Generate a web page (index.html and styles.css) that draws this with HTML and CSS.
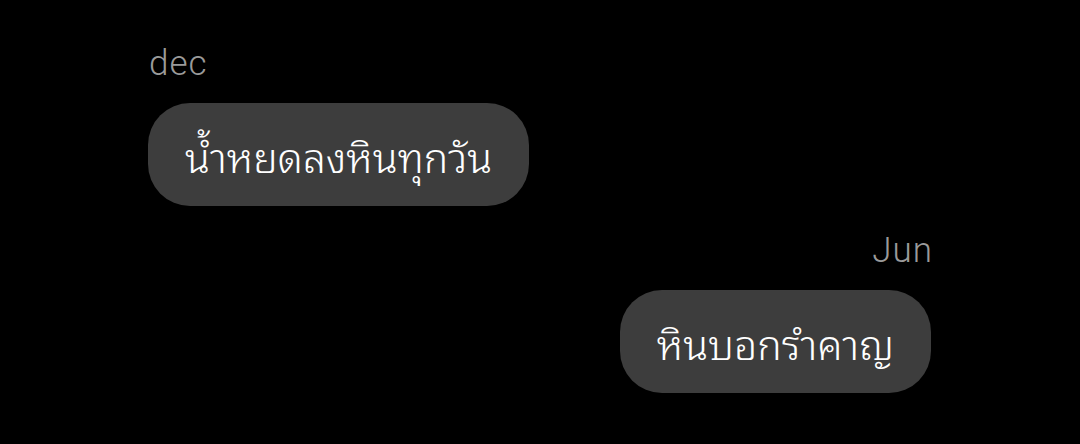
FILE: index.html
```html
<!DOCTYPE html>
<html lang="th">
<head>
<meta charset="utf-8">
<link rel="stylesheet" href="styles.css">
</head>
<body>
<main class="chat">
  <section class="msg msg-left">
    <div class="name">dec</div>
    <div class="bubble">น้ำหยดลงหินทุกวัน</div>
  </section>
  <section class="msg msg-right">
    <div class="name">Jun</div>
    <div class="bubble">หินบอกรำคาญ</div>
  </section>
</main>
</body>
</html>
```
FILE: styles.css
```css
html, body {
  margin: 0;
  padding: 0;
  background: #000;
  height: 100%;
}
.chat {
  width: 783px;
  margin-left: 148px;
  padding-top: 44px;
  display: flex;
  flex-direction: column;
  gap: 25px;
}
.msg {
  display: flex;
  flex-direction: column;
}
.msg-left { align-items: flex-start; }
.msg-right { align-items: flex-end; }
.name {
  font-family: Roboto, "Liberation Sans", sans-serif;
  font-weight: 300;
  font-size: 35px;
  line-height: 40px;
  letter-spacing: 1px;
  color: #9a9a9a;
  padding: 0 0 0 1px;
  margin-bottom: 19px;
}
.msg-right .name {
  margin-right: -2px;
}
.bubble {
  background: #3d3d3d;
  color: #fff;
  font-family: "Noto Sans Thai Looped", "Noto Sans Thai", "Noto Sans", sans-serif;
  font-weight: 300;
  font-size: 41px;
  line-height: 43px;
  padding: 30px 37px;
  border-radius: 42px;
}
```
